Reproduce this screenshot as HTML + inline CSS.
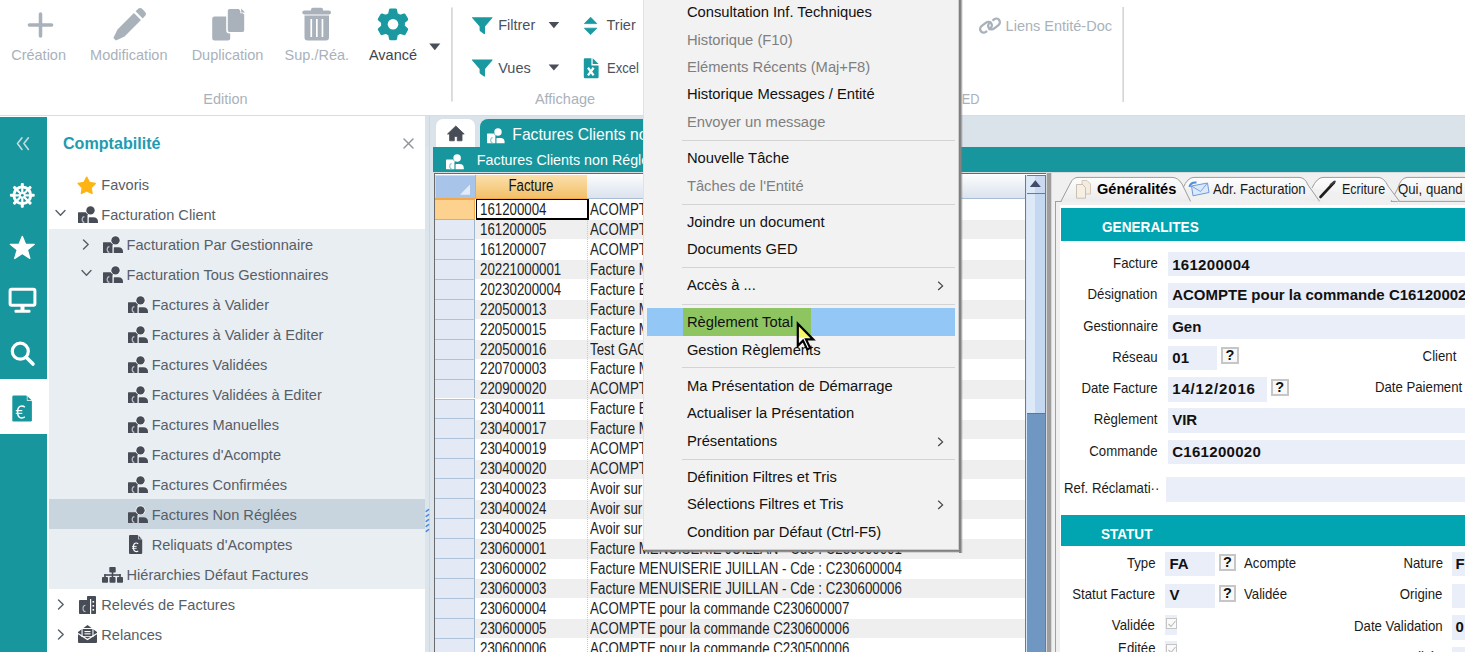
<!DOCTYPE html>
<html><head><meta charset="utf-8">
<style>
*{box-sizing:border-box;margin:0;padding:0}
html,body{width:1465px;height:652px;overflow:hidden;background:#fff;font-family:"Liberation Sans",sans-serif;position:relative}
.a{position:absolute}
.t{position:absolute;white-space:nowrap;line-height:1}
svg{position:absolute;overflow:visible}
</style></head><body>
<div class="a" style="left:0;top:0;width:1465px;height:116px;background:#fff;border-bottom:1px solid #d3dee7"></div>
<svg style="left:0;top:0" width="1465" height="116">
<g stroke="#a9b2bb" stroke-width="3.5" stroke-linecap="round">
<line x1="29.4" y1="25" x2="51.6" y2="25"/><line x1="40.5" y1="14" x2="40.5" y2="36"/></g>
<g transform="translate(128.8,25.2) rotate(45)" fill="#a9b2bb">
<path d="M-1.8,20 L1.8,20 L5,11 L5,-12.2 L-5,-12.2 L-5,11 Z"/>
<path d="M-5,-14.6 L5,-14.6 L5,-17.5 Q5,-21 1.5,-21 L-1.5,-21 Q-5,-21 -5,-17.5 Z"/></g>
<rect x="212.2" y="16.4" width="18" height="24.2" rx="2.5" fill="#a9b2bb"/>
<path d="M227,10.7 Q227,8.2 229.5,8.2 L239,8.2 L245,14.2 L245,30.3 Q245,32.8 242.5,32.8 L229.5,32.8 Q227,32.8 227,30.3 Z" fill="#a9b2bb" stroke="#fff" stroke-width="1.6"/>
<path d="M240.3,8.2 L245.4,13.3 L240.3,13.3 Z" fill="#fff"/>
<path d="M241.2,8.6 L245,12.4 L241.2,12.4 Z" fill="#a9b2bb"/>
<rect x="311" y="7.8" width="12" height="4.5" rx="1.8" fill="#a9b2bb"/>
<rect x="302.3" y="10.4" width="28.7" height="4.2" rx="2" fill="#a9b2bb"/>
<path d="M304.5,15.6 L329,15.6 L329,37.6 Q329,40.6 326,40.6 L307.5,40.6 Q304.5,40.6 304.5,37.6 Z" fill="#a9b2bb"/>
<g fill="#fff"><rect x="310.4" y="19" width="1.7" height="18"/><rect x="316" y="19" width="1.7" height="18"/><rect x="321.6" y="19" width="1.7" height="18"/></g>
<g transform="translate(393,24.3)"><path d="M-3.40,-10.04 L-2.50,-14.38 L2.50,-14.38 L3.40,-10.04 L6.99,-7.96 L11.21,-9.36 L13.71,-5.03 L10.39,-2.08 L10.39,2.08 L13.71,5.03 L11.21,9.36 L6.99,7.96 L3.40,10.04 L2.50,14.38 L-2.50,14.38 L-3.40,10.04 L-6.99,7.96 L-11.21,9.36 L-13.71,5.03 L-10.39,2.08 L-10.39,-2.08 L-13.71,-5.03 L-11.21,-9.36 L-6.99,-7.96Z" fill="#1a99a0" stroke="#1a99a0" stroke-width="3" stroke-linejoin="round"/><circle r="5.3" fill="#fff"/></g>
<path d="M429.3,43.4 L440.3,43.4 L434.8,50.2 Z" fill="#4a4e58"/>
<rect x="451.3" y="7.5" width="1.3" height="94" fill="#c7cbd0"/>
<rect x="1122.5" y="7" width="1.3" height="95" fill="#c7cbd0"/>
</svg>
<div class="t" style="left:38.6px;top:47.73px;font-size:14.5px;color:#a9b2bb;font-weight:normal;transform:translateX(-50%);">Création</div>
<div class="t" style="left:128.8px;top:47.73px;font-size:14.5px;color:#a9b2bb;font-weight:normal;transform:translateX(-50%);">Modification</div>
<div class="t" style="left:227.5px;top:47.73px;font-size:14.5px;color:#a9b2bb;font-weight:normal;transform:translateX(-50%);">Duplication</div>
<div class="t" style="left:316.8px;top:47.73px;font-size:14.5px;color:#a9b2bb;font-weight:normal;transform:translateX(-50%);">Sup./Réa.</div>
<div class="t" style="left:393.0px;top:47.73px;font-size:14.5px;color:#3d4550;font-weight:normal;transform:translateX(-50%);">Avancé</div>
<div class="t" style="left:225.5px;top:92.23px;font-size:14.5px;color:#a9b2bb;font-weight:normal;transform:translateX(-50%);">Edition</div>
<svg style="left:0;top:0" width="1465" height="116">
<path d="M472,17.2 L492.3,17.2 Q492.8,17.2 492.3,18 L485,26.5 L485,33.5 Q485,34.5 484,34 L480.5,31.5 Q479.6,30.9 479.6,30 L479.6,26.5 L472.2,18 Q471.7,17.2 472,17.2 Z" fill="#1a99a0"/>
<path d="M472,59.6 L492.3,59.6 Q492.8,59.6 492.3,60.4 L485,68.9 L485,75.9 Q485,76.9 484,76.4 L480.5,73.9 Q479.6,73.3 479.6,72.4 L479.6,68.9 L472.2,60.4 Q471.7,59.6 472,59.6 Z" fill="#1a99a0"/>
<path d="M548.6,22 L559.2,22 L553.9,28.2 Z" fill="#4a4e58"/>
<path d="M548.6,64.4 L559.2,64.4 L553.9,70.6 Z" fill="#4a4e58"/>
<path d="M590.6,17.2 L596.8,23.6 L584.4,23.6 Z" fill="#1a99a0" stroke="#1a99a0" stroke-width="0.8" stroke-linejoin="round"/>
<path d="M590.6,34.6 L596.8,28.2 L584.4,28.2 Z" fill="#1a99a0" stroke="#1a99a0" stroke-width="0.8" stroke-linejoin="round"/>
<path d="M585,58.2 L591.4,58.2 L591.4,65.4 L598.6,65.4 L598.6,77 Q598.6,78.2 597.4,78.2 L585,78.2 Q583.8,78.2 583.8,77 L583.8,59.4 Q583.8,58.2 585,58.2 Z" fill="#1a99a0"/>
<path d="M592.7,58.2 L598.6,64.1 L592.7,64.1 Z" fill="#1a99a0"/>
<path d="M588,67.8 L593.6,75.4 M593.6,67.8 L588,75.4" stroke="#fff" stroke-width="2.3"/>
<g fill="none" stroke="#a9b1ba" stroke-width="2.3" stroke-linecap="round">
<rect x="979.5" y="23.6" width="13" height="7.2" rx="3.6" transform="rotate(-38 986 27.2)" stroke-dasharray="18.3 3.8 40"/>
<rect x="987.5" y="20.4" width="13" height="7.2" rx="3.6" transform="rotate(-38 994 24)" stroke-dasharray="1 3.8 40"/>
</g>
</svg>
<div class="t" style="left:498.2px;top:18.13px;font-size:14.5px;color:#4b525c;font-weight:normal;">Filtrer</div>
<div class="t" style="left:606.5px;top:18.13px;font-size:14.5px;color:#4b525c;font-weight:normal;">Trier</div>
<div class="t" style="left:498.2px;top:61.33px;font-size:14.5px;color:#4b525c;font-weight:normal;">Vues</div>
<div class="t" style="left:606.5px;top:61.33px;font-size:14.5px;color:#4b525c;font-weight:normal;transform-origin:0 0;transform:scaleX(0.9);">Excel</div>
<div class="t" style="left:565.0px;top:92.23px;font-size:14.5px;color:#a9b2bb;font-weight:normal;transform:translateX(-50%);">Affichage</div>
<div class="t" style="left:1005.6px;top:19.23px;font-size:14.5px;color:#a9b2bb;font-weight:normal;">Liens Entité-Doc</div>
<div class="t" style="left:948.2px;top:92.23px;font-size:14.5px;color:#a9b2bb;font-weight:normal;transform-origin:100% 0;transform:scaleX(0.88)">GED</div>
<div class="a" style="left:0;top:117px;width:47px;height:535px;background:#18969d"></div>
<div class="a" style="left:0;top:379px;width:47px;height:55px;background:#fff"></div>
<svg style="left:0;top:117px" width="47" height="535">
<g fill="none" stroke="#c5dcde" stroke-width="1.6" stroke-linecap="round" stroke-linejoin="round">
<path d="M22,20.8 L17.5,26.6 L22,32.4 M28.4,20.8 L23.9,26.6 L28.4,32.4"/></g>
<g transform="translate(22.3,78.3)">
<circle r="9.9" fill="#fff"/>
<g fill="#fff"><rect x="-1.5" y="-12.4" width="3" height="4" rx="1" transform="rotate(0)"/><rect x="-1.5" y="-12.4" width="3" height="4" rx="1" transform="rotate(45)"/><rect x="-1.5" y="-12.4" width="3" height="4" rx="1" transform="rotate(90)"/><rect x="-1.5" y="-12.4" width="3" height="4" rx="1" transform="rotate(135)"/><rect x="-1.5" y="-12.4" width="3" height="4" rx="1" transform="rotate(180)"/><rect x="-1.5" y="-12.4" width="3" height="4" rx="1" transform="rotate(225)"/><rect x="-1.5" y="-12.4" width="3" height="4" rx="1" transform="rotate(270)"/><rect x="-1.5" y="-12.4" width="3" height="4" rx="1" transform="rotate(315)"/></g>
<path d="M3.22,1.10 L6.81,1.10 A6.9,6.9 0 0 1 5.59,4.04 L3.05,1.50 A3.4,3.4 0 0 0 3.22,1.10Z M1.50,3.05 L4.04,5.59 A6.9,6.9 0 0 1 1.10,6.81 L1.10,3.22 A3.4,3.4 0 0 0 1.50,3.05Z M-1.10,3.22 L-1.10,6.81 A6.9,6.9 0 0 1 -4.04,5.59 L-1.50,3.05 A3.4,3.4 0 0 0 -1.10,3.22Z M-3.05,1.50 L-5.59,4.04 A6.9,6.9 0 0 1 -6.81,1.10 L-3.22,1.10 A3.4,3.4 0 0 0 -3.05,1.50Z M-3.22,-1.10 L-6.81,-1.10 A6.9,6.9 0 0 1 -5.59,-4.04 L-3.05,-1.50 A3.4,3.4 0 0 0 -3.22,-1.10Z M-1.50,-3.05 L-4.04,-5.59 A6.9,6.9 0 0 1 -1.10,-6.81 L-1.10,-3.22 A3.4,3.4 0 0 0 -1.50,-3.05Z M1.10,-3.22 L1.10,-6.81 A6.9,6.9 0 0 1 4.04,-5.59 L1.50,-3.05 A3.4,3.4 0 0 0 1.10,-3.22Z M3.05,-1.50 L5.59,-4.04 A6.9,6.9 0 0 1 6.81,-1.10 L3.22,-1.10 A3.4,3.4 0 0 0 3.05,-1.50Z" fill="#18969d"/><circle r="1.4" fill="#18969d"/></g>
<path transform="translate(22.3,131.3)" fill="#fff" stroke="#fff" stroke-width="1.2" stroke-linejoin="round" d="M0,-12 L3.2,-4.2 L12,-3.9 L5.2,1.6 L7.6,10.2 L0,5.3 L-7.6,10.2 L-5.2,1.6 L-12,-3.9 L-3.2,-4.2 Z"/>
<g fill="none" stroke="#fff" stroke-width="3">
<rect x="10.1" y="172.3" width="24.8" height="16" rx="1.5"/></g>
<rect x="20.5" y="189" width="4" height="4" fill="#fff"/>
<rect x="14.5" y="192.8" width="16" height="3" rx="1" fill="#fff"/>
<circle cx="20.3" cy="234.2" r="8" fill="none" stroke="#fff" stroke-width="3.2"/>
<line x1="26.2" y1="240.2" x2="33" y2="247" stroke="#fff" stroke-width="3.6" stroke-linecap="round"/>
<path d="M13.6,278.6 L26.2,278.6 L31.9,284.3 L31.9,303.2 Q31.9,304.6 30.5,304.6 L13.6,304.6 Q12.3,304.6 12.3,303.2 L12.3,280 Q12.3,278.6 13.6,278.6 Z" fill="#18969d"/>
<path d="M26.8,278.6 L31.9,283.7 L26.8,283.7 Z" fill="#fff"/>
<path d="M27.5,279.2 L31.3,283 L27.5,283 Z" fill="#18969d"/>
<path d="M24.8,290.2 Q23.6,289 21.8,289 Q17.6,289 17.6,295 Q17.6,301 21.8,301 Q23.6,301 24.8,299.8" fill="none" stroke="#fff" stroke-width="1.5"/>
<g stroke="#fff" stroke-width="1.2"><line x1="15.8" y1="293.6" x2="22.3" y2="293.6"/><line x1="15.8" y1="296.4" x2="22.3" y2="296.4"/></g>
</svg>
<div class="a" style="left:47px;top:117px;width:378px;height:535px;background:#fff"></div>
<div class="a" style="left:49px;top:229px;width:376px;height:360px;background:#e9eef2"></div>
<div class="a" style="left:49px;top:499px;width:376px;height:30px;background:#c8d5df"></div>
<div class="t" style="left:63.0px;top:134.87px;font-size:16.1px;color:#229bb0;font-weight:bold;">Comptabilité</div>
<svg style="left:403px;top:138px" width="11" height="11"><g stroke="#8e959c" stroke-width="1.4" stroke-linecap="round"><line x1="1" y1="1" x2="10" y2="10"/><line x1="10" y1="1" x2="1" y2="10"/></g></svg>
<svg style="left:77px;top:175.5px" width="20" height="19"><path transform="translate(9.7,10.2)" fill="#fdb414" stroke="#fdb414" stroke-width="1.6" stroke-linejoin="round" d="M0.00,-8.90 L2.65,-3.64 L8.46,-2.75 L4.28,1.39 L5.23,7.20 L0.00,4.50 L-5.23,7.20 L-4.28,1.39 L-8.46,-2.75 L-2.65,-3.64Z"/></svg>
<div class="t" style="left:101.3px;top:177.64px;font-size:14.6px;color:#565e68;font-weight:normal;">Favoris</div>
<svg style="left:55px;top:209px" width="12" height="9"><path d="M1,1.5 L5.5,6.2 L10,1.5" fill="none" stroke="#565e68" stroke-width="1.4" stroke-linecap="round" stroke-linejoin="round"/></svg>
<svg style="left:77.9px;top:205.8px" width="21" height="18"><rect x="0" y="6.2" width="9.9" height="10.7" rx="0.5" fill="#474c57"/>
<circle cx="12.5" cy="4.4" r="4.9" fill="#fff"/><circle cx="12.5" cy="4.4" r="4.2" fill="#474c57"/>
<path d="M10.6,16.9 L10.6,11.9 Q10.6,11.2 11.4,11.2 L15.2,11.2 Q20,11.2 20,15.8 L20,16.9 Z" fill="#474c57"/>
<path d="M9.95,9 L9.95,17" stroke="#fff" stroke-width="0.8"/>
<path d="M6.4,10.6 Q4.2,10.9 4.2,13.6 Q4.2,16.3 6.4,16.5" fill="none" stroke="#b4b8be" stroke-width="1.3"/></svg>
<div class="t" style="left:101.3px;top:207.64px;font-size:14.6px;color:#565e68;font-weight:normal;">Facturation Client</div>
<svg style="left:81.5px;top:238.5px" width="9" height="12"><path d="M1.5,1 L6.2,5.5 L1.5,10" fill="none" stroke="#565e68" stroke-width="1.4" stroke-linecap="round" stroke-linejoin="round"/></svg>
<svg style="left:102.6px;top:235.8px" width="21" height="18"><rect x="0" y="6.2" width="9.9" height="10.7" rx="0.5" fill="#474c57"/>
<circle cx="12.5" cy="4.4" r="4.9" fill="#fff"/><circle cx="12.5" cy="4.4" r="4.2" fill="#474c57"/>
<path d="M10.6,16.9 L10.6,11.9 Q10.6,11.2 11.4,11.2 L15.2,11.2 Q20,11.2 20,15.8 L20,16.9 Z" fill="#474c57"/>
<path d="M9.95,9 L9.95,17" stroke="#fff" stroke-width="0.8"/>
<path d="M6.4,10.6 Q4.2,10.9 4.2,13.6 Q4.2,16.3 6.4,16.5" fill="none" stroke="#b4b8be" stroke-width="1.3"/></svg>
<div class="t" style="left:126.6px;top:237.64px;font-size:14.6px;color:#565e68;font-weight:normal;">Facturation Par Gestionnaire</div>
<svg style="left:80.5px;top:269px" width="12" height="9"><path d="M1,1.5 L5.5,6.2 L10,1.5" fill="none" stroke="#565e68" stroke-width="1.4" stroke-linecap="round" stroke-linejoin="round"/></svg>
<svg style="left:102.6px;top:265.8px" width="21" height="18"><rect x="0" y="6.2" width="9.9" height="10.7" rx="0.5" fill="#474c57"/>
<circle cx="12.5" cy="4.4" r="4.9" fill="#fff"/><circle cx="12.5" cy="4.4" r="4.2" fill="#474c57"/>
<path d="M10.6,16.9 L10.6,11.9 Q10.6,11.2 11.4,11.2 L15.2,11.2 Q20,11.2 20,15.8 L20,16.9 Z" fill="#474c57"/>
<path d="M9.95,9 L9.95,17" stroke="#fff" stroke-width="0.8"/>
<path d="M6.4,10.6 Q4.2,10.9 4.2,13.6 Q4.2,16.3 6.4,16.5" fill="none" stroke="#b4b8be" stroke-width="1.3"/></svg>
<div class="t" style="left:126.6px;top:267.64px;font-size:14.6px;color:#565e68;font-weight:normal;">Facturation Tous Gestionnaires</div>
<svg style="left:127.6px;top:295.8px" width="21" height="18"><rect x="0" y="6.2" width="9.9" height="10.7" rx="0.5" fill="#474c57"/>
<circle cx="12.5" cy="4.4" r="4.9" fill="#fff"/><circle cx="12.5" cy="4.4" r="4.2" fill="#474c57"/>
<path d="M10.6,16.9 L10.6,11.9 Q10.6,11.2 11.4,11.2 L15.2,11.2 Q20,11.2 20,15.8 L20,16.9 Z" fill="#474c57"/>
<path d="M9.95,9 L9.95,17" stroke="#fff" stroke-width="0.8"/>
<path d="M6.4,10.6 Q4.2,10.9 4.2,13.6 Q4.2,16.3 6.4,16.5" fill="none" stroke="#b4b8be" stroke-width="1.3"/></svg>
<div class="t" style="left:151.7px;top:297.64px;font-size:14.6px;color:#565e68;font-weight:normal;">Factures à Valider</div>
<svg style="left:127.6px;top:325.8px" width="21" height="18"><rect x="0" y="6.2" width="9.9" height="10.7" rx="0.5" fill="#474c57"/>
<circle cx="12.5" cy="4.4" r="4.9" fill="#fff"/><circle cx="12.5" cy="4.4" r="4.2" fill="#474c57"/>
<path d="M10.6,16.9 L10.6,11.9 Q10.6,11.2 11.4,11.2 L15.2,11.2 Q20,11.2 20,15.8 L20,16.9 Z" fill="#474c57"/>
<path d="M9.95,9 L9.95,17" stroke="#fff" stroke-width="0.8"/>
<path d="M6.4,10.6 Q4.2,10.9 4.2,13.6 Q4.2,16.3 6.4,16.5" fill="none" stroke="#b4b8be" stroke-width="1.3"/></svg>
<div class="t" style="left:151.7px;top:327.64px;font-size:14.6px;color:#565e68;font-weight:normal;">Factures à Valider à Editer</div>
<svg style="left:127.6px;top:355.8px" width="21" height="18"><rect x="0" y="6.2" width="9.9" height="10.7" rx="0.5" fill="#474c57"/>
<circle cx="12.5" cy="4.4" r="4.9" fill="#fff"/><circle cx="12.5" cy="4.4" r="4.2" fill="#474c57"/>
<path d="M10.6,16.9 L10.6,11.9 Q10.6,11.2 11.4,11.2 L15.2,11.2 Q20,11.2 20,15.8 L20,16.9 Z" fill="#474c57"/>
<path d="M9.95,9 L9.95,17" stroke="#fff" stroke-width="0.8"/>
<path d="M6.4,10.6 Q4.2,10.9 4.2,13.6 Q4.2,16.3 6.4,16.5" fill="none" stroke="#b4b8be" stroke-width="1.3"/></svg>
<div class="t" style="left:151.7px;top:357.64px;font-size:14.6px;color:#565e68;font-weight:normal;">Factures Validées</div>
<svg style="left:127.6px;top:385.8px" width="21" height="18"><rect x="0" y="6.2" width="9.9" height="10.7" rx="0.5" fill="#474c57"/>
<circle cx="12.5" cy="4.4" r="4.9" fill="#fff"/><circle cx="12.5" cy="4.4" r="4.2" fill="#474c57"/>
<path d="M10.6,16.9 L10.6,11.9 Q10.6,11.2 11.4,11.2 L15.2,11.2 Q20,11.2 20,15.8 L20,16.9 Z" fill="#474c57"/>
<path d="M9.95,9 L9.95,17" stroke="#fff" stroke-width="0.8"/>
<path d="M6.4,10.6 Q4.2,10.9 4.2,13.6 Q4.2,16.3 6.4,16.5" fill="none" stroke="#b4b8be" stroke-width="1.3"/></svg>
<div class="t" style="left:151.7px;top:387.64px;font-size:14.6px;color:#565e68;font-weight:normal;">Factures Validées à Editer</div>
<svg style="left:127.6px;top:415.8px" width="21" height="18"><rect x="0" y="6.2" width="9.9" height="10.7" rx="0.5" fill="#474c57"/>
<circle cx="12.5" cy="4.4" r="4.9" fill="#fff"/><circle cx="12.5" cy="4.4" r="4.2" fill="#474c57"/>
<path d="M10.6,16.9 L10.6,11.9 Q10.6,11.2 11.4,11.2 L15.2,11.2 Q20,11.2 20,15.8 L20,16.9 Z" fill="#474c57"/>
<path d="M9.95,9 L9.95,17" stroke="#fff" stroke-width="0.8"/>
<path d="M6.4,10.6 Q4.2,10.9 4.2,13.6 Q4.2,16.3 6.4,16.5" fill="none" stroke="#b4b8be" stroke-width="1.3"/></svg>
<div class="t" style="left:151.7px;top:417.64px;font-size:14.6px;color:#565e68;font-weight:normal;">Factures Manuelles</div>
<svg style="left:127.6px;top:445.8px" width="21" height="18"><rect x="0" y="6.2" width="9.9" height="10.7" rx="0.5" fill="#474c57"/>
<circle cx="12.5" cy="4.4" r="4.9" fill="#fff"/><circle cx="12.5" cy="4.4" r="4.2" fill="#474c57"/>
<path d="M10.6,16.9 L10.6,11.9 Q10.6,11.2 11.4,11.2 L15.2,11.2 Q20,11.2 20,15.8 L20,16.9 Z" fill="#474c57"/>
<path d="M9.95,9 L9.95,17" stroke="#fff" stroke-width="0.8"/>
<path d="M6.4,10.6 Q4.2,10.9 4.2,13.6 Q4.2,16.3 6.4,16.5" fill="none" stroke="#b4b8be" stroke-width="1.3"/></svg>
<div class="t" style="left:151.7px;top:447.64px;font-size:14.6px;color:#565e68;font-weight:normal;">Factures d'Acompte</div>
<svg style="left:127.6px;top:475.8px" width="21" height="18"><rect x="0" y="6.2" width="9.9" height="10.7" rx="0.5" fill="#474c57"/>
<circle cx="12.5" cy="4.4" r="4.9" fill="#fff"/><circle cx="12.5" cy="4.4" r="4.2" fill="#474c57"/>
<path d="M10.6,16.9 L10.6,11.9 Q10.6,11.2 11.4,11.2 L15.2,11.2 Q20,11.2 20,15.8 L20,16.9 Z" fill="#474c57"/>
<path d="M9.95,9 L9.95,17" stroke="#fff" stroke-width="0.8"/>
<path d="M6.4,10.6 Q4.2,10.9 4.2,13.6 Q4.2,16.3 6.4,16.5" fill="none" stroke="#b4b8be" stroke-width="1.3"/></svg>
<div class="t" style="left:151.7px;top:477.64px;font-size:14.6px;color:#565e68;font-weight:normal;">Factures Confirmées</div>
<svg style="left:127.6px;top:505.8px" width="21" height="18"><rect x="0" y="6.2" width="9.9" height="10.7" rx="0.5" fill="#474c57"/>
<circle cx="12.5" cy="4.4" r="4.9" fill="#fff"/><circle cx="12.5" cy="4.4" r="4.2" fill="#474c57"/>
<path d="M10.6,16.9 L10.6,11.9 Q10.6,11.2 11.4,11.2 L15.2,11.2 Q20,11.2 20,15.8 L20,16.9 Z" fill="#474c57"/>
<path d="M9.95,9 L9.95,17" stroke="#fff" stroke-width="0.8"/>
<path d="M6.4,10.6 Q4.2,10.9 4.2,13.6 Q4.2,16.3 6.4,16.5" fill="none" stroke="#b4b8be" stroke-width="1.3"/></svg>
<div class="t" style="left:151.7px;top:507.64px;font-size:14.6px;color:#565e68;font-weight:normal;">Factures Non Réglées</div>
<svg style="left:129px;top:535px" width="14" height="19"><path d="M1,0 L8.5,0 L13.2,4.7 L13.2,18 Q13.2,19 12.2,19 L1,19 Q0,19 0,18 L0,1 Q0,0 1,0 Z" fill="#474c57"/>
<path d="M9,0 L13.2,4.2 L9,4.2 Z" fill="#e9eef2"/><path d="M9.6,0.8 L12.5,3.7 L9.6,3.7 Z" fill="#474c57"/>
<path d="M9.2,8.8 Q8.4,8 7.3,8 Q4.4,8 4.4,12.3 Q4.4,16.6 7.3,16.6 Q8.4,16.6 9.2,15.8" fill="none" stroke="#fff" stroke-width="1.2"/>
<g stroke="#fff" stroke-width="0.9"><line x1="3" y1="11.4" x2="7.6" y2="11.4"/><line x1="3" y1="13.3" x2="7.6" y2="13.3"/></g></svg>
<div class="t" style="left:151.7px;top:537.64px;font-size:14.6px;color:#565e68;font-weight:normal;">Reliquats d'Acomptes</div>
<svg style="left:102px;top:566.5px" width="21" height="16" fill="#474c57">
<rect x="7.3" y="0" width="6.4" height="5.6" rx="0.8"/><rect x="0" y="10" width="6" height="5.8" rx="0.8"/><rect x="7.5" y="10" width="6" height="5.8" rx="0.8"/><rect x="15" y="10" width="6" height="5.8" rx="0.8"/>
<rect x="9.7" y="5" width="1.6" height="5"/><rect x="2.2" y="7.2" width="16.6" height="1.6"/><rect x="2.2" y="7.2" width="1.6" height="3"/><rect x="17.2" y="7.2" width="1.6" height="3"/></svg>
<div class="t" style="left:126.5px;top:567.64px;font-size:14.6px;color:#565e68;font-weight:normal;">Hiérarchies Défaut Factures</div>
<svg style="left:56.5px;top:598.5px" width="9" height="12"><path d="M1.5,1 L6.2,5.5 L1.5,10" fill="none" stroke="#565e68" stroke-width="1.4" stroke-linecap="round" stroke-linejoin="round"/></svg>
<svg style="left:79px;top:596px" width="17" height="18" fill="#474c57">
<rect x="0" y="4" width="11" height="14" rx="0.8"/><rect x="8" y="0" width="9" height="18" rx="0.8"/>
<g fill="#fff"><rect x="11" y="3" width="1.2" height="15"/><rect x="13.5" y="5" width="1.6" height="1.6"/><rect x="13.5" y="9" width="1.6" height="1.6"/><rect x="13.5" y="13" width="1.6" height="1.6"/></g>
<path d="M6.5,9.2 Q4,9.2 4,12.4 Q4,15.6 6.5,15.6" fill="none" stroke="#b9bcc2" stroke-width="1.1"/></svg>
<div class="t" style="left:101.3px;top:597.64px;font-size:14.6px;color:#565e68;font-weight:normal;">Relevés de Factures</div>
<svg style="left:56.5px;top:628.5px" width="9" height="12"><path d="M1.5,1 L6.2,5.5 L1.5,10" fill="none" stroke="#565e68" stroke-width="1.4" stroke-linecap="round" stroke-linejoin="round"/></svg>
<svg style="left:78px;top:624px" width="19" height="19" fill="#474c57">
<path d="M0,8 L9.5,1 L19,8 L19,18 Q19,19 18,19 L1,19 Q0,19 0,18 Z"/>
<rect x="3.5" y="4" width="12" height="9" fill="#fff"/><rect x="4.6" y="5" width="9.8" height="7.2" fill="#474c57"/>
<g fill="#fff"><rect x="6.5" y="7" width="6" height="1.1"/><rect x="6.5" y="9.3" width="6" height="1.1"/></g>
<path d="M0,9.5 L9.5,15.5 L19,9.5" fill="none" stroke="#fff" stroke-width="1.3"/></svg>
<div class="t" style="left:101.3px;top:627.64px;font-size:14.6px;color:#565e68;font-weight:normal;">Relances</div>
<div class="a" style="left:425px;top:116px;width:1040px;height:31px;background:#dae2ea"></div>
<div class="a" style="left:425px;top:147px;width:9px;height:505px;background:#dde5ec"></div>
<div class="a" style="left:428.8px;top:116px;width:1.5px;height:536px;background:#c2d8f5"></div>
<div class="a" style="left:435.5px;top:118.7px;width:39px;height:30px;background:#fff;border-radius:7px 7px 0 0"></div>
<svg style="left:447px;top:125px" width="18" height="17"><path d="M0.5,9 L8.8,1 L17.2,9 L15,9 L15,15.8 L10.3,15.8 L10.3,11.5 L7.3,11.5 L7.3,15.8 L2.6,15.8 L2.6,9 Z" fill="#474c57" stroke="#474c57" stroke-width="0.8" stroke-linejoin="round"/></svg>
<div class="a" style="left:480.4px;top:118.5px;width:260px;height:30px;background:#17969d;border-radius:8px 0 0 0"></div>
<div class="a" style="left:432.8px;top:146.8px;width:1040px;height:24.9px;background:#17969d"></div>
<div class="a" style="left:432.8px;top:171.7px;width:1040px;height:1.5px;background:#d9dcdf"></div>
<svg style="left:487.4px;top:127.6px" width="21" height="18"><g transform="scale(0.88,0.9)"><rect x="0" y="6.2" width="9.9" height="10.7" rx="0.5" fill="#fff"/>
<circle cx="12.5" cy="4.4" r="4.9" fill="#17969d"/><circle cx="12.5" cy="4.4" r="4.2" fill="#fff"/>
<path d="M10.6,16.9 L10.6,11.9 Q10.6,11.2 11.4,11.2 L15.2,11.2 Q20,11.2 20,15.8 L20,16.9 Z" fill="#fff"/>
<path d="M9.95,9 L9.95,17" stroke="#17969d" stroke-width="0.8"/>
<path d="M6.4,10.6 Q4.2,10.9 4.2,13.6 Q4.2,16.3 6.4,16.5" fill="none" stroke="#8cc8cc" stroke-width="1.3"/></g></svg>
<svg style="left:446px;top:153.5px" width="21" height="18"><g transform="scale(0.89,0.9)"><rect x="0" y="6.2" width="9.9" height="10.7" rx="0.5" fill="#fff"/>
<circle cx="12.5" cy="4.4" r="4.9" fill="#17969d"/><circle cx="12.5" cy="4.4" r="4.2" fill="#fff"/>
<path d="M10.6,16.9 L10.6,11.9 Q10.6,11.2 11.4,11.2 L15.2,11.2 Q20,11.2 20,15.8 L20,16.9 Z" fill="#fff"/>
<path d="M9.95,9 L9.95,17" stroke="#17969d" stroke-width="0.8"/>
<path d="M6.4,10.6 Q4.2,10.9 4.2,13.6 Q4.2,16.3 6.4,16.5" fill="none" stroke="#8cc8cc" stroke-width="1.3"/></g></svg>
<div class="t" style="left:512.3px;top:127.31px;font-size:15.7px;color:#fff;font-weight:normal;">Factures Clients non Réglées</div>
<div class="t" style="left:476.8px;top:152.50px;font-size:14.3px;color:#fff;font-weight:normal;">Factures Clients non Réglées</div>
<svg style="left:425px;top:508px" width="6" height="26"><g stroke="#4a8ae0" stroke-width="1.5" stroke-linecap="round"><line x1="1.2" y1="3.4" x2="3.6" y2="1.6"/><line x1="1.2" y1="8.4" x2="3.6" y2="6.6"/><line x1="1.2" y1="13.4" x2="3.6" y2="11.6"/><line x1="1.2" y1="18.4" x2="3.6" y2="16.6"/><line x1="1.2" y1="23.4" x2="3.6" y2="21.6"/></g></svg>
<div class="a" style="left:433.5px;top:173px;width:613px;height:479px;background:#fff;border-left:1.3px solid #6a6a6a;border-top:1.3px solid #6a6a6a"></div>
<div class="a" style="left:435px;top:174.5px;width:40px;height:23.8px;background:#a8c4e9;border-top:1px solid #c8daf2;border-left:1px solid #c8daf2"></div>
<svg style="left:459px;top:184px" width="12" height="11"><path d="M1,10.7 L11,0.4 L11,10.7 Z" fill="#e4ebf7"/></svg>
<div class="a" style="left:475px;top:174.5px;width:112px;height:24px;background:linear-gradient(#fbe0ad,#f3c068);border-left:1px solid #f2a84a;border-bottom:1.5px solid #f2a84a"></div>
<div class="a" style="left:587px;top:174.5px;width:438px;height:24px;background:linear-gradient(#fbfcfd,#dbe3ed);border-bottom:1.3px solid #a9bcd3"></div>
<div class="a" style="left:435px;top:197.6px;width:40px;height:1.5px;background:#f2a84a"></div>
<div class="t" style="left:531.0px;top:177.96px;font-size:16px;color:#111;font-weight:normal;transform:translateX(-50%) scaleX(0.83);">Facture</div>
<div class="a" style="left:435px;top:199.00px;width:40px;height:19.95px;background:#fdd28e;border-top:1.2px solid #f2a84a;border-right:1.2px solid #f2a84a"></div>
<div class="t" style="left:479.5px;top:201.86px;font-size:16px;color:#1e1e1e;font-weight:normal;transform-origin:0 0;transform:scaleX(0.83);">161200004</div>
<div class="t" style="left:590.3px;top:201.86px;font-size:16px;color:#1e1e1e;font-weight:normal;transform-origin:0 0;transform:scaleX(0.831);">ACOMPTE pour la commande C161200020</div>
<div class="a" style="left:475px;top:220.25px;width:550px;height:19.1px;background:#efefef"></div>
<div class="a" style="left:435px;top:218.95px;width:40px;height:19.95px;background:#e3eaf6;border-top:1.2px solid #f2a84a;border-right:1.2px solid #9fb6d3"></div>
<div class="t" style="left:479.5px;top:221.81px;font-size:16px;color:#1e1e1e;font-weight:normal;transform-origin:0 0;transform:scaleX(0.83);">161200005</div>
<div class="t" style="left:590.3px;top:221.81px;font-size:16px;color:#1e1e1e;font-weight:normal;transform-origin:0 0;transform:scaleX(0.831);">ACOMPTE pour la commande C161200021</div>
<div class="a" style="left:435px;top:238.90px;width:40px;height:19.95px;background:#e3eaf6;border-top:1.2px solid #aec2da;border-right:1.2px solid #9fb6d3"></div>
<div class="t" style="left:479.5px;top:241.76px;font-size:16px;color:#1e1e1e;font-weight:normal;transform-origin:0 0;transform:scaleX(0.83);">161200007</div>
<div class="t" style="left:590.3px;top:241.76px;font-size:16px;color:#1e1e1e;font-weight:normal;transform-origin:0 0;transform:scaleX(0.831);">ACOMPTE pour la commande C161200022</div>
<div class="a" style="left:475px;top:260.15px;width:550px;height:19.1px;background:#efefef"></div>
<div class="a" style="left:435px;top:258.85px;width:40px;height:19.95px;background:#e3eaf6;border-top:1.2px solid #aec2da;border-right:1.2px solid #9fb6d3"></div>
<div class="t" style="left:479.5px;top:261.71px;font-size:16px;color:#1e1e1e;font-weight:normal;transform-origin:0 0;transform:scaleX(0.83);">20221000001</div>
<div class="t" style="left:590.3px;top:261.71px;font-size:16px;color:#1e1e1e;font-weight:normal;transform-origin:0 0;transform:scaleX(0.831);">Facture MENUISERIE JUILLAN - Cde : C221000001</div>
<div class="a" style="left:435px;top:278.80px;width:40px;height:19.95px;background:#e3eaf6;border-top:1.2px solid #aec2da;border-right:1.2px solid #9fb6d3"></div>
<div class="t" style="left:479.5px;top:281.66px;font-size:16px;color:#1e1e1e;font-weight:normal;transform-origin:0 0;transform:scaleX(0.83);">20230200004</div>
<div class="t" style="left:590.3px;top:281.66px;font-size:16px;color:#1e1e1e;font-weight:normal;transform-origin:0 0;transform:scaleX(0.831);">Facture BOIS DE FRANCE - Cde : C230200004</div>
<div class="a" style="left:475px;top:300.05px;width:550px;height:19.1px;background:#efefef"></div>
<div class="a" style="left:435px;top:298.75px;width:40px;height:19.95px;background:#e3eaf6;border-top:1.2px solid #aec2da;border-right:1.2px solid #9fb6d3"></div>
<div class="t" style="left:479.5px;top:301.61px;font-size:16px;color:#1e1e1e;font-weight:normal;transform-origin:0 0;transform:scaleX(0.83);">220500013</div>
<div class="t" style="left:590.3px;top:301.61px;font-size:16px;color:#1e1e1e;font-weight:normal;transform-origin:0 0;transform:scaleX(0.831);">Facture MENUISERIE JUILLAN - Cde : C220500013</div>
<div class="a" style="left:435px;top:318.70px;width:40px;height:19.95px;background:#e3eaf6;border-top:1.2px solid #aec2da;border-right:1.2px solid #9fb6d3"></div>
<div class="t" style="left:479.5px;top:321.56px;font-size:16px;color:#1e1e1e;font-weight:normal;transform-origin:0 0;transform:scaleX(0.83);">220500015</div>
<div class="t" style="left:590.3px;top:321.56px;font-size:16px;color:#1e1e1e;font-weight:normal;transform-origin:0 0;transform:scaleX(0.831);">Facture MENUISERIE JUILLAN - Cde : C220500015</div>
<div class="a" style="left:475px;top:339.95px;width:550px;height:19.1px;background:#efefef"></div>
<div class="a" style="left:435px;top:338.65px;width:40px;height:19.95px;background:#e3eaf6;border-top:1.2px solid #aec2da;border-right:1.2px solid #9fb6d3"></div>
<div class="t" style="left:479.5px;top:341.51px;font-size:16px;color:#1e1e1e;font-weight:normal;transform-origin:0 0;transform:scaleX(0.83);">220500016</div>
<div class="t" style="left:590.3px;top:341.51px;font-size:16px;color:#1e1e1e;font-weight:normal;transform-origin:0 0;transform:scaleX(0.831);">Test GAC</div>
<div class="a" style="left:435px;top:358.60px;width:40px;height:19.95px;background:#e3eaf6;border-top:1.2px solid #aec2da;border-right:1.2px solid #9fb6d3"></div>
<div class="t" style="left:479.5px;top:361.46px;font-size:16px;color:#1e1e1e;font-weight:normal;transform-origin:0 0;transform:scaleX(0.83);">220700003</div>
<div class="t" style="left:590.3px;top:361.46px;font-size:16px;color:#1e1e1e;font-weight:normal;transform-origin:0 0;transform:scaleX(0.831);">Facture MENUISERIE JUILLAN - Cde : C220700003</div>
<div class="a" style="left:475px;top:379.85px;width:550px;height:19.1px;background:#efefef"></div>
<div class="a" style="left:435px;top:378.55px;width:40px;height:19.95px;background:#e3eaf6;border-top:1.2px solid #aec2da;border-right:1.2px solid #9fb6d3"></div>
<div class="t" style="left:479.5px;top:381.41px;font-size:16px;color:#1e1e1e;font-weight:normal;transform-origin:0 0;transform:scaleX(0.83);">220900020</div>
<div class="t" style="left:590.3px;top:381.41px;font-size:16px;color:#1e1e1e;font-weight:normal;transform-origin:0 0;transform:scaleX(0.831);">ACOMPTE pour la commande C220900020</div>
<div class="a" style="left:435px;top:398.50px;width:40px;height:19.95px;background:#e3eaf6;border-top:1.2px solid #aec2da;border-right:1.2px solid #9fb6d3"></div>
<div class="t" style="left:479.5px;top:401.36px;font-size:16px;color:#1e1e1e;font-weight:normal;transform-origin:0 0;transform:scaleX(0.83);">230400011</div>
<div class="t" style="left:590.3px;top:401.36px;font-size:16px;color:#1e1e1e;font-weight:normal;transform-origin:0 0;transform:scaleX(0.831);">Facture BOIS DE FRANCE - Cde : C230400011</div>
<div class="a" style="left:475px;top:419.75px;width:550px;height:19.1px;background:#efefef"></div>
<div class="a" style="left:435px;top:418.45px;width:40px;height:19.95px;background:#e3eaf6;border-top:1.2px solid #aec2da;border-right:1.2px solid #9fb6d3"></div>
<div class="t" style="left:479.5px;top:421.31px;font-size:16px;color:#1e1e1e;font-weight:normal;transform-origin:0 0;transform:scaleX(0.83);">230400017</div>
<div class="t" style="left:590.3px;top:421.31px;font-size:16px;color:#1e1e1e;font-weight:normal;transform-origin:0 0;transform:scaleX(0.831);">Facture MENUISERIE JUILLAN - Cde : C230400017</div>
<div class="a" style="left:435px;top:438.40px;width:40px;height:19.95px;background:#e3eaf6;border-top:1.2px solid #aec2da;border-right:1.2px solid #9fb6d3"></div>
<div class="t" style="left:479.5px;top:441.26px;font-size:16px;color:#1e1e1e;font-weight:normal;transform-origin:0 0;transform:scaleX(0.83);">230400019</div>
<div class="t" style="left:590.3px;top:441.26px;font-size:16px;color:#1e1e1e;font-weight:normal;transform-origin:0 0;transform:scaleX(0.831);">ACOMPTE pour la commande C230400019</div>
<div class="a" style="left:475px;top:459.65px;width:550px;height:19.1px;background:#efefef"></div>
<div class="a" style="left:435px;top:458.35px;width:40px;height:19.95px;background:#e3eaf6;border-top:1.2px solid #aec2da;border-right:1.2px solid #9fb6d3"></div>
<div class="t" style="left:479.5px;top:461.21px;font-size:16px;color:#1e1e1e;font-weight:normal;transform-origin:0 0;transform:scaleX(0.83);">230400020</div>
<div class="t" style="left:590.3px;top:461.21px;font-size:16px;color:#1e1e1e;font-weight:normal;transform-origin:0 0;transform:scaleX(0.831);">ACOMPTE pour la commande C230400020</div>
<div class="a" style="left:435px;top:478.30px;width:40px;height:19.95px;background:#e3eaf6;border-top:1.2px solid #aec2da;border-right:1.2px solid #9fb6d3"></div>
<div class="t" style="left:479.5px;top:481.16px;font-size:16px;color:#1e1e1e;font-weight:normal;transform-origin:0 0;transform:scaleX(0.83);">230400023</div>
<div class="t" style="left:590.3px;top:481.16px;font-size:16px;color:#1e1e1e;font-weight:normal;transform-origin:0 0;transform:scaleX(0.831);">Avoir sur facture 230400011</div>
<div class="a" style="left:475px;top:499.55px;width:550px;height:19.1px;background:#efefef"></div>
<div class="a" style="left:435px;top:498.25px;width:40px;height:19.95px;background:#e3eaf6;border-top:1.2px solid #aec2da;border-right:1.2px solid #9fb6d3"></div>
<div class="t" style="left:479.5px;top:501.11px;font-size:16px;color:#1e1e1e;font-weight:normal;transform-origin:0 0;transform:scaleX(0.83);">230400024</div>
<div class="t" style="left:590.3px;top:501.11px;font-size:16px;color:#1e1e1e;font-weight:normal;transform-origin:0 0;transform:scaleX(0.831);">Avoir sur facture 230400017</div>
<div class="a" style="left:435px;top:518.20px;width:40px;height:19.95px;background:#e3eaf6;border-top:1.2px solid #aec2da;border-right:1.2px solid #9fb6d3"></div>
<div class="t" style="left:479.5px;top:521.06px;font-size:16px;color:#1e1e1e;font-weight:normal;transform-origin:0 0;transform:scaleX(0.83);">230400025</div>
<div class="t" style="left:590.3px;top:521.06px;font-size:16px;color:#1e1e1e;font-weight:normal;transform-origin:0 0;transform:scaleX(0.831);">Avoir sur facture 230400019</div>
<div class="a" style="left:475px;top:539.45px;width:550px;height:19.1px;background:#efefef"></div>
<div class="a" style="left:435px;top:538.15px;width:40px;height:19.95px;background:#e3eaf6;border-top:1.2px solid #aec2da;border-right:1.2px solid #9fb6d3"></div>
<div class="t" style="left:479.5px;top:541.01px;font-size:16px;color:#1e1e1e;font-weight:normal;transform-origin:0 0;transform:scaleX(0.83);">230600001</div>
<div class="t" style="left:590.3px;top:541.01px;font-size:16px;color:#1e1e1e;font-weight:normal;transform-origin:0 0;transform:scaleX(0.831);">Facture MENUISERIE JUILLAN - Cde : C230600001</div>
<div class="a" style="left:435px;top:558.10px;width:40px;height:19.95px;background:#e3eaf6;border-top:1.2px solid #aec2da;border-right:1.2px solid #9fb6d3"></div>
<div class="t" style="left:479.5px;top:560.96px;font-size:16px;color:#1e1e1e;font-weight:normal;transform-origin:0 0;transform:scaleX(0.83);">230600002</div>
<div class="t" style="left:590.3px;top:560.96px;font-size:16px;color:#1e1e1e;font-weight:normal;transform-origin:0 0;transform:scaleX(0.831);">Facture MENUISERIE JUILLAN - Cde : C230600004</div>
<div class="a" style="left:475px;top:579.35px;width:550px;height:19.1px;background:#efefef"></div>
<div class="a" style="left:435px;top:578.05px;width:40px;height:19.95px;background:#e3eaf6;border-top:1.2px solid #aec2da;border-right:1.2px solid #9fb6d3"></div>
<div class="t" style="left:479.5px;top:580.91px;font-size:16px;color:#1e1e1e;font-weight:normal;transform-origin:0 0;transform:scaleX(0.83);">230600003</div>
<div class="t" style="left:590.3px;top:580.91px;font-size:16px;color:#1e1e1e;font-weight:normal;transform-origin:0 0;transform:scaleX(0.831);">Facture MENUISERIE JUILLAN - Cde : C230600006</div>
<div class="a" style="left:435px;top:598.00px;width:40px;height:19.95px;background:#e3eaf6;border-top:1.2px solid #aec2da;border-right:1.2px solid #9fb6d3"></div>
<div class="t" style="left:479.5px;top:600.86px;font-size:16px;color:#1e1e1e;font-weight:normal;transform-origin:0 0;transform:scaleX(0.83);">230600004</div>
<div class="t" style="left:590.3px;top:600.86px;font-size:16px;color:#1e1e1e;font-weight:normal;transform-origin:0 0;transform:scaleX(0.831);">ACOMPTE pour la commande C230600007</div>
<div class="a" style="left:475px;top:619.25px;width:550px;height:19.1px;background:#efefef"></div>
<div class="a" style="left:435px;top:617.95px;width:40px;height:19.95px;background:#e3eaf6;border-top:1.2px solid #aec2da;border-right:1.2px solid #9fb6d3"></div>
<div class="t" style="left:479.5px;top:620.81px;font-size:16px;color:#1e1e1e;font-weight:normal;transform-origin:0 0;transform:scaleX(0.83);">230600005</div>
<div class="t" style="left:590.3px;top:620.81px;font-size:16px;color:#1e1e1e;font-weight:normal;transform-origin:0 0;transform:scaleX(0.831);">ACOMPTE pour la commande C230600006</div>
<div class="a" style="left:435px;top:637.90px;width:40px;height:19.95px;background:#e3eaf6;border-top:1.2px solid #aec2da;border-right:1.2px solid #9fb6d3"></div>
<div class="t" style="left:479.5px;top:640.76px;font-size:16px;color:#1e1e1e;font-weight:normal;transform-origin:0 0;transform:scaleX(0.83);">230600006</div>
<div class="t" style="left:590.3px;top:640.76px;font-size:16px;color:#1e1e1e;font-weight:normal;transform-origin:0 0;transform:scaleX(0.831);">ACOMPTE pour la commande C230500006</div>
<div class="a" style="left:586.5px;top:199px;width:0;height:453px;border-left:1px dotted #c8c8c8"></div>
<div class="a" style="left:476.3px;top:199.3px;width:112.5px;height:20.3px;border:1.2px solid #000;border-right-width:2.6px;border-bottom-width:2.8px"></div>
<div class="a" style="left:1025px;top:174.5px;width:21px;height:478px;background:linear-gradient(90deg,#d6e5f6 0,#d6e5f6 45%,#c2d6f0 45%,#c2d6f0 100%);border-left:1.5px solid #6879a2;border-right:1.5px solid #6879a2"></div>
<div class="a" style="left:1026.5px;top:174.5px;width:18px;height:19px;background:linear-gradient(90deg,#dde9f7 0,#dde9f7 45%,#cad9ef 45%,#cad9ef 100%);border-bottom:1.5px solid #6879a2;border-top:1.5px solid #6879a2"></div>
<svg style="left:1029px;top:179px" width="13" height="9"><path d="M0.8,8 L6.3,1.2 L11.8,8 Z" fill="#3f4a6c"/></svg>
<div class="a" style="left:1026.5px;top:194.5px;width:18px;height:219px;background:linear-gradient(90deg,#dde9f7 0,#dde9f7 45%,#c5d8f1 45%,#c5d8f1 100%);border-bottom:1.5px solid #5f739c"></div>
<div class="a" style="left:1026.5px;top:413.5px;width:18px;height:240px;background:#7096c2"></div>
<div class="a" style="left:1046px;top:173px;width:6px;height:479px;background:#d7d7d7"></div>
<div class="a" style="left:1047.4px;top:173px;width:3.8px;height:479px;background:#9d9d9d"></div>
<div class="a" style="left:1052px;top:173px;width:413px;height:479px;background:#f0f0f0"></div>
<div class="a" style="left:1054.5px;top:201px;width:411px;height:451px;border-left:1px solid #a0a0a0;background:#f0f0f0"></div>
<div class="a" style="left:1054.5px;top:201px;width:7px;height:1px;background:#a0a0a0"></div>
<div class="a" style="left:1060px;top:204.5px;width:405px;height:448px;background:#fff"></div>
<svg style="left:1052px;top:172px" width="413" height="32">
<defs><linearGradient id="tg" x1="0" y1="0" x2="0" y2="1"><stop offset="0" stop-color="#fdfdfd"/><stop offset="1" stop-color="#ececec"/></linearGradient></defs>
<path d="M339,29.4 L346,16 Q348.5,6.2 355,5.4 L420,5.4 L420,29.4 Z" fill="url(#tg)" stroke="#9c9c9c" stroke-width="1"/>
<path d="M260,16 Q265,5.4 271,5.4 L326,5.4 Q332,5.4 336,14 L347.5,29.4" fill="url(#tg)" stroke="#9c9c9c" stroke-width="1"/>
<path d="M131,16 Q135.5,5.4 142,5.4 L247,5.4 Q253,5.4 256,13 L267.6,29.4" fill="url(#tg)" stroke="#9c9c9c" stroke-width="1"/>
<path d="M8.9,29.4 L18.5,11 Q21,5.4 26,5.4 L120,5.4 Q126,5.4 130,12 L138.6,29.4" fill="url(#tg)" stroke="#9c9c9c" stroke-width="1"/>
<g transform="translate(24,8)">
<path d="M6,0.5 L11,0.5 L14.5,4 L14.5,14 L6,14 Z" fill="#f3ecdf" stroke="#c9bfae" stroke-width="0.8"/>
<path d="M0.5,4.5 L6.5,4.5 L9.5,7.5 L9.5,18.2 L0.5,18.2 Z" fill="#f6f0e4" stroke="#bfb4a2" stroke-width="0.8"/>
</g>
<g transform="translate(137.5,10)">
<path d="M2,4 L18,1 L19.5,10.5 L3.5,13.8 Z" fill="#dce9fb" stroke="#6f9ad6" stroke-width="1"/>
<path d="M2,4 L11,9.5 L18,1" fill="none" stroke="#6f9ad6" stroke-width="0.9"/>
<path d="M0,5 Q1,0 7,0.5" fill="none" stroke="#4d8fe0" stroke-width="2"/>
</g>
<path d="M268.5,25 L282,10.5" stroke="#1e1e1e" stroke-width="2.6" stroke-linecap="round"/>
<path d="M278,13 L283.5,9" stroke="#444" stroke-width="1.6"/>
</svg>
<div class="t" style="left:1097.1px;top:181.95px;font-size:14px;color:#000;font-weight:bold;transform-origin:0 0;transform:scaleX(1.04)">Généralités</div>
<div class="t" style="left:1212.5px;top:181.10px;font-size:15px;color:#1a1a1a;font-weight:normal;transform-origin:0 0;transform:scaleX(0.875);">Adr. Facturation</div>
<div class="t" style="left:1342.1px;top:181.10px;font-size:15px;color:#1a1a1a;font-weight:normal;transform-origin:0 0;transform:scaleX(0.835);">Ecriture</div>
<div class="t" style="left:1398.3px;top:181.10px;font-size:15px;color:#1a1a1a;font-weight:normal;transform-origin:0 0;transform:scaleX(0.88);">Qui, quand</div>
<div class="a" style="left:1061px;top:208.2px;width:404px;height:32.4px;background:#00a5b1"></div>
<div class="t" style="left:1101.5px;top:218.56px;font-size:15.4px;color:#fff;font-weight:bold;transform-origin:0 0;transform:scaleX(0.884);">GENERALITES</div>
<div class="a" style="left:1167.5px;top:252.4px;width:297.5px;height:24.00px;background:#e9eef9"></div>
<div class="t" style="right:307.3px;top:255.40px;font-size:15px;color:#1a1a1a;font-weight:normal;transform-origin:100% 0;transform:scaleX(0.88);">Facture</div>
<div class="t" style="left:1172.2px;top:256.50px;font-size:15px;color:#111;font-weight:bold;letter-spacing:0.3px">161200004</div>
<div class="a" style="left:1167.5px;top:283.3px;width:297.5px;height:24.70px;background:#e9eef9"></div>
<div class="t" style="right:307.3px;top:286.30px;font-size:15px;color:#1a1a1a;font-weight:normal;transform-origin:100% 0;transform:scaleX(0.88);">Désignation</div>
<div class="t" style="left:1172.2px;top:287.40px;font-size:15px;color:#111;font-weight:bold;letter-spacing:0">ACOMPTE pour la commande C16120002</div>
<div class="a" style="left:1167.5px;top:314.6px;width:297.5px;height:24.70px;background:#e9eef9"></div>
<div class="t" style="right:307.3px;top:317.60px;font-size:15px;color:#1a1a1a;font-weight:normal;transform-origin:100% 0;transform:scaleX(0.88);">Gestionnaire</div>
<div class="t" style="left:1172.2px;top:318.70px;font-size:15px;color:#111;font-weight:bold;letter-spacing:0">Gen</div>
<div class="a" style="left:1167.5px;top:345.7px;width:49.7px;height:24.50px;background:#e9eef9"></div>
<div class="t" style="right:307.3px;top:348.70px;font-size:15px;color:#1a1a1a;font-weight:normal;transform-origin:100% 0;transform:scaleX(0.88);">Réseau</div>
<div class="t" style="left:1172.2px;top:349.80px;font-size:15px;color:#111;font-weight:bold;letter-spacing:0.3px">01</div>
<div class="a" style="left:1167.5px;top:377px;width:99.4px;height:24.50px;background:#e9eef9"></div>
<div class="t" style="right:307.3px;top:380.00px;font-size:15px;color:#1a1a1a;font-weight:normal;transform-origin:100% 0;transform:scaleX(0.88);">Date Facture</div>
<div class="t" style="left:1172.2px;top:381.10px;font-size:15px;color:#111;font-weight:bold;letter-spacing:0.85px">14/12/2016</div>
<div class="a" style="left:1167.5px;top:408.3px;width:297.5px;height:24.60px;background:#e9eef9"></div>
<div class="t" style="right:307.3px;top:411.30px;font-size:15px;color:#1a1a1a;font-weight:normal;transform-origin:100% 0;transform:scaleX(0.88);">Règlement</div>
<div class="t" style="left:1172.2px;top:412.40px;font-size:15px;color:#111;font-weight:bold;letter-spacing:0">VIR</div>
<div class="a" style="left:1167.5px;top:439.8px;width:297.5px;height:24.40px;background:#e9eef9"></div>
<div class="t" style="right:307.3px;top:442.80px;font-size:15px;color:#1a1a1a;font-weight:normal;transform-origin:100% 0;transform:scaleX(0.88);">Commande</div>
<div class="t" style="left:1172.2px;top:443.90px;font-size:15px;color:#111;font-weight:bold;letter-spacing:0.3px">C161200020</div>
<div class="a" style="left:1221.2px;top:347.2px;width:17.5px;height:17.2px;border:2px solid #c6c6c6;background:#f8f8f8"></div>
<div class="t" style="left:1230.0px;top:348.13px;font-size:14.5px;color:#111;font-weight:bold;transform:translateX(-50%);">?</div>
<div class="a" style="left:1271px;top:378.6px;width:17.5px;height:17.2px;border:2px solid #c6c6c6;background:#f8f8f8"></div>
<div class="t" style="left:1279.8px;top:379.53px;font-size:14.5px;color:#111;font-weight:bold;transform:translateX(-50%);">?</div>
<div class="t" style="right:8.5px;top:347.50px;font-size:15px;color:#1a1a1a;font-weight:normal;transform-origin:100% 0;transform:scaleX(0.88);">Client</div>
<div class="t" style="right:2.5px;top:379.30px;font-size:15px;color:#1a1a1a;font-weight:normal;transform-origin:100% 0;transform:scaleX(0.88);">Date Paiement</div>
<div class="a" style="left:1166px;top:477.1px;width:299px;height:24.50px;background:#e9eef9"></div>
<div class="t" style="right:305.8px;top:480.10px;font-size:15px;color:#1a1a1a;font-weight:normal;transform-origin:100% 0;transform:scaleX(0.88);">Ref. Réclamati··</div>
<div class="a" style="left:1061px;top:514.8px;width:404px;height:31.1px;background:#00a5b1"></div>
<div class="t" style="left:1100.5px;top:525.56px;font-size:15.4px;color:#fff;font-weight:bold;transform-origin:0 0;transform:scaleX(0.88);">STATUT</div>
<div class="a" style="left:1165px;top:551.8px;width:49.9px;height:24.60px;background:#e9eef9"></div>
<div class="t" style="right:309.8px;top:554.60px;font-size:15px;color:#1a1a1a;font-weight:normal;transform-origin:100% 0;transform:scaleX(0.88);">Type</div>
<div class="t" style="left:1169.5px;top:555.70px;font-size:15px;color:#111;font-weight:bold;letter-spacing:0">FA</div>
<div class="a" style="left:1218.8px;top:553.6px;width:17.5px;height:17.2px;border:2px solid #c6c6c6;background:#f8f8f8"></div>
<div class="t" style="left:1227.5px;top:554.53px;font-size:14.5px;color:#111;font-weight:bold;transform:translateX(-50%);">?</div>
<div class="t" style="left:1243.8px;top:554.60px;font-size:15px;color:#1a1a1a;font-weight:normal;transform-origin:0 0;transform:scaleX(0.88);">Acompte</div>
<div class="t" style="right:22.2px;top:554.90px;font-size:15px;color:#1a1a1a;font-weight:normal;transform-origin:100% 0;transform:scaleX(0.88);">Nature</div>
<div class="a" style="left:1451.7px;top:551.8px;width:13.299999999999955px;height:24.60px;background:#e9eef9"></div>
<div class="t" style="left:1455.5px;top:555.70px;font-size:15px;color:#111;font-weight:bold;letter-spacing:0">F</div>
<div class="a" style="left:1165px;top:583.6px;width:49.9px;height:24.40px;background:#e9eef9"></div>
<div class="t" style="right:309.8px;top:585.90px;font-size:15px;color:#1a1a1a;font-weight:normal;transform-origin:100% 0;transform:scaleX(0.88);">Statut Facture</div>
<div class="t" style="left:1169.5px;top:587.10px;font-size:15px;color:#111;font-weight:bold;letter-spacing:0">V</div>
<div class="a" style="left:1218.8px;top:585.2px;width:17.5px;height:17.2px;border:2px solid #c6c6c6;background:#f8f8f8"></div>
<div class="t" style="left:1227.5px;top:586.13px;font-size:14.5px;color:#111;font-weight:bold;transform:translateX(-50%);">?</div>
<div class="t" style="left:1243.8px;top:585.70px;font-size:15px;color:#1a1a1a;font-weight:normal;transform-origin:0 0;transform:scaleX(0.88);">Validée</div>
<div class="t" style="right:22.2px;top:586.20px;font-size:15px;color:#1a1a1a;font-weight:normal;transform-origin:100% 0;transform:scaleX(0.88);">Origine</div>
<div class="a" style="left:1451.7px;top:583.6px;width:13.299999999999955px;height:24.40px;background:#e9eef9"></div>
<div class="t" style="right:309.8px;top:616.50px;font-size:15px;color:#1a1a1a;font-weight:normal;transform-origin:100% 0;transform:scaleX(0.88);">Validée</div>
<div class="t" style="right:22.2px;top:617.90px;font-size:15px;color:#1a1a1a;font-weight:normal;transform-origin:100% 0;transform:scaleX(0.88);">Date Validation</div>
<div class="a" style="left:1451.7px;top:615px;width:13.299999999999955px;height:24.50px;background:#e9eef9"></div>
<div class="t" style="left:1455.5px;top:618.80px;font-size:15px;color:#111;font-weight:bold;letter-spacing:0.3px">0</div>
<div class="a" style="left:1165px;top:614.5px;width:12.4px;height:20.7px;background:#e9eef9"></div>
<div class="a" style="left:1165.8px;top:617.5px;width:11px;height:11px;border:1px solid #c4c4c4;background:#fafafa"></div>
<svg style="left:1166.5px;top:618.5px" width="10" height="10"><path d="M1.5,5 L4,7.5 L8.5,2" fill="none" stroke="#bdbdbd" stroke-width="1.1"/></svg>
<div class="t" style="right:309.8px;top:640.40px;font-size:15px;color:#1a1a1a;font-weight:normal;transform-origin:100% 0;transform:scaleX(0.88);">Editée</div>
<div class="a" style="left:1165px;top:640.5px;width:12.4px;height:12px;background:#e9eef9"></div>
<div class="a" style="left:1165.8px;top:643.5px;width:11px;height:11px;border:1px solid #c4c4c4;background:#fafafa"></div>
<svg style="left:1166.5px;top:644.5px" width="10" height="10"><path d="M1.5,5 L4,7.5 L8.5,2" fill="none" stroke="#bdbdbd" stroke-width="1.1"/></svg>
<div class="t" style="right:22.2px;top:648.70px;font-size:15px;color:#1a1a1a;font-weight:normal;transform-origin:100% 0;transform:scaleX(0.88);">Date Editée</div>
<div class="a" style="left:1451.7px;top:646.5px;width:13.299999999999955px;height:24.50px;background:#e9eef9"></div>
<div class="a" style="left:959.4px;top:0;width:3.6px;height:553px;background:linear-gradient(90deg,#7d7d7d 0,#858585 45%,rgba(120,120,120,0.35) 75%,rgba(120,120,120,0))"></div>
<div class="a" style="left:644.8px;top:549.6px;width:316.5px;height:3.6px;background:linear-gradient(#7d7d7d 0,#858585 45%,rgba(120,120,120,0.35) 75%,rgba(120,120,120,0))"></div>
<div class="a" style="left:643.3px;top:-2px;width:316.1px;height:551.6px;background:#f2f2f2;border:1px solid #cfcfcf;border-left-color:#e2e2e2"></div>
<div class="a" style="left:682px;top:139.9px;width:273px;height:1px;background:#d4d4d4"></div>
<div class="a" style="left:682px;top:203.8px;width:273px;height:1px;background:#d4d4d4"></div>
<div class="a" style="left:682px;top:267.2px;width:273px;height:1px;background:#d4d4d4"></div>
<div class="a" style="left:682px;top:303.9px;width:273px;height:1px;background:#d4d4d4"></div>
<div class="a" style="left:682px;top:367.2px;width:273px;height:1px;background:#d4d4d4"></div>
<div class="a" style="left:682px;top:459.0px;width:273px;height:1px;background:#d4d4d4"></div>
<div class="a" style="left:646.7px;top:308.4px;width:308.5px;height:27.8px;background:#93c7f5"></div>
<div class="a" style="left:683px;top:308.4px;width:128px;height:27.8px;background:#8fc561"></div>
<div class="t" style="left:686.9px;top:4.91px;font-size:14.75px;color:#111111;font-weight:normal;">Consultation Inf. Techniques</div>
<div class="t" style="left:686.9px;top:32.81px;font-size:14.75px;color:#7f7f7f;font-weight:normal;">Historique (F10)</div>
<div class="t" style="left:686.9px;top:59.71px;font-size:14.75px;color:#7f7f7f;font-weight:normal;">Eléments Récents (Maj+F8)</div>
<div class="t" style="left:686.9px;top:87.31px;font-size:14.75px;color:#111111;font-weight:normal;">Historique Messages / Entité</div>
<div class="t" style="left:686.9px;top:114.61px;font-size:14.75px;color:#7f7f7f;font-weight:normal;">Envoyer un message</div>
<div class="t" style="left:686.9px;top:150.91px;font-size:14.75px;color:#111111;font-weight:normal;">Nouvelle Tâche</div>
<div class="t" style="left:686.9px;top:178.81px;font-size:14.75px;color:#7f7f7f;font-weight:normal;">Tâches de l'Entité</div>
<div class="t" style="left:686.9px;top:214.51px;font-size:14.75px;color:#111111;font-weight:normal;">Joindre un document</div>
<div class="t" style="left:686.9px;top:242.11px;font-size:14.75px;color:#111111;font-weight:normal;">Documents GED</div>
<div class="t" style="left:686.9px;top:277.91px;font-size:14.75px;color:#111111;font-weight:normal;">Accès à ...</div>
<svg style="left:937px;top:280.9px" width="8" height="10"><path d="M1.2,0.8 L5.6,4.9 L1.2,9" fill="none" stroke="#444" stroke-width="1.2"/></svg>
<div class="t" style="left:686.9px;top:314.51px;font-size:14.75px;color:#111111;font-weight:normal;">Règlement Total</div>
<div class="t" style="left:686.9px;top:342.51px;font-size:14.75px;color:#111111;font-weight:normal;">Gestion Règlements</div>
<div class="t" style="left:686.9px;top:378.51px;font-size:14.75px;color:#111111;font-weight:normal;">Ma Présentation de Démarrage</div>
<div class="t" style="left:686.9px;top:405.51px;font-size:14.75px;color:#111111;font-weight:normal;">Actualiser la Présentation</div>
<div class="t" style="left:686.9px;top:433.51px;font-size:14.75px;color:#111111;font-weight:normal;">Présentations</div>
<svg style="left:937px;top:436.5px" width="8" height="10"><path d="M1.2,0.8 L5.6,4.9 L1.2,9" fill="none" stroke="#444" stroke-width="1.2"/></svg>
<div class="t" style="left:686.9px;top:469.71px;font-size:14.75px;color:#111111;font-weight:normal;">Définition Filtres et Tris</div>
<div class="t" style="left:686.9px;top:496.81px;font-size:14.75px;color:#111111;font-weight:normal;">Sélections Filtres et Tris</div>
<svg style="left:937px;top:499.8px" width="8" height="10"><path d="M1.2,0.8 L5.6,4.9 L1.2,9" fill="none" stroke="#444" stroke-width="1.2"/></svg>
<div class="t" style="left:686.9px;top:524.71px;font-size:14.75px;color:#111111;font-weight:normal;">Condition par Défaut (Ctrl-F5)</div>
<svg style="left:797px;top:322.5px" width="22" height="32">
<defs><linearGradient id="cg" x1="0" y1="0" x2="0" y2="27" gradientUnits="userSpaceOnUse"><stop offset="0" stop-color="#f6f86a"/><stop offset="0.52" stop-color="#f6f86a"/><stop offset="0.56" stop-color="#ffffff"/><stop offset="1" stop-color="#ffffff"/></linearGradient></defs>
<path d="M0.8,0.8 L0.8,22.8 L6,17.6 L10.2,26.4 L13.2,25 L9,16.4 L16.2,16.4 Z" fill="url(#cg)" stroke="#000" stroke-width="2.2" stroke-linejoin="miter"/>
</svg>
</body></html>
